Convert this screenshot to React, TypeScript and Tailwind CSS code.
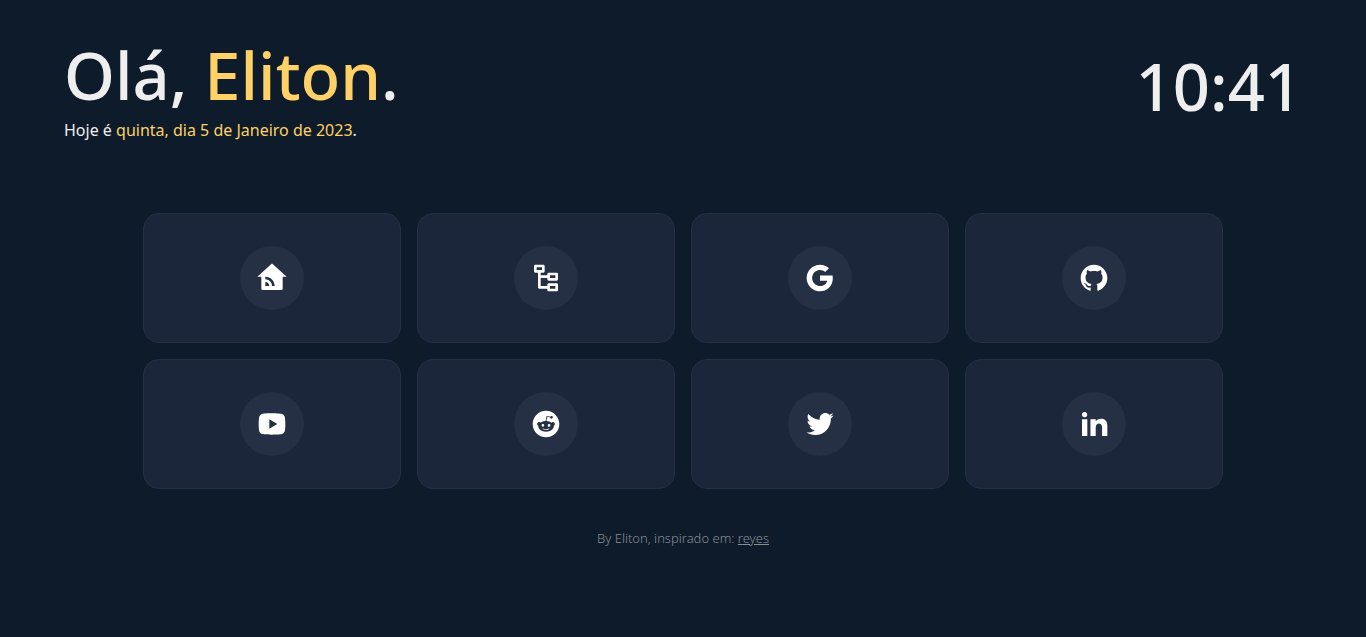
import type { IconType } from 'react-icons'
import {
  RiGithubFill,
  RiGoogleFill,
  RiHomeWifiFill,
  RiLinkedinFill,
  RiNodeTree,
  RiRedditFill,
  RiTwitterFill,
  RiYoutubeFill,
} from 'react-icons/ri'

type Shortcut = { name: string; href: string; Icon: IconType }

const shortcuts: Shortcut[] = [
  { name: 'Roteador', href: '#roteador', Icon: RiHomeWifiFill },
  { name: 'Projetos', href: '#projetos', Icon: RiNodeTree },
  { name: 'Google', href: '#google', Icon: RiGoogleFill },
  { name: 'GitHub', href: '#github', Icon: RiGithubFill },
  { name: 'YouTube', href: '#youtube', Icon: RiYoutubeFill },
  { name: 'Reddit', href: '#reddit', Icon: RiRedditFill },
  { name: 'Twitter', href: '#twitter', Icon: RiTwitterFill },
  { name: 'LinkedIn', href: '#linkedin', Icon: RiLinkedinFill },
]

function ShortcutCard({ name, href, Icon }: Shortcut) {
  return (
    <a
      href={href}
      aria-label={name}
      className="flex items-center justify-center rounded-2xl border border-[#253044] bg-[#1b263b] py-8"
    >
      <span className="flex size-16 items-center justify-center rounded-full bg-[#253044] text-white">
        <Icon className="size-8" aria-hidden="true" />
      </span>
    </a>
  )
}

export default function App() {
  return (
    <div className="min-h-screen bg-[#0d1b2a] font-['Noto_Sans',sans-serif] text-[#eeeeee]">
      <header className="flex items-center justify-between px-16 py-8">
        <div>
          <h1 className="text-[65px] leading-[87px] font-medium">
            Olá, <span className="text-[#ffd166]">Eliton</span>.
          </h1>
          <p className="text-base leading-[22px]">
            Hoje é <span className="text-[#ffd166]">quinta, dia 5 de Janeiro de 2023</span>.
          </p>
        </div>
        <time className="text-[65px] leading-[87px] font-medium">10:41</time>
      </header>
      <main className="px-16 pt-10">
        <nav className="mx-auto grid max-w-[1080px] grid-cols-4 gap-4">
          {shortcuts.map((item) => (
            <ShortcutCard key={item.name} {...item} />
          ))}
        </nav>
      </main>
      <footer className="py-10 text-center text-[13px] leading-[18px] font-light text-[#868c93]">
        By Eliton, inspirado em:{' '}
        <a href="#reyes" className="underline">
          reyes
        </a>
      </footer>
    </div>
  )
}
